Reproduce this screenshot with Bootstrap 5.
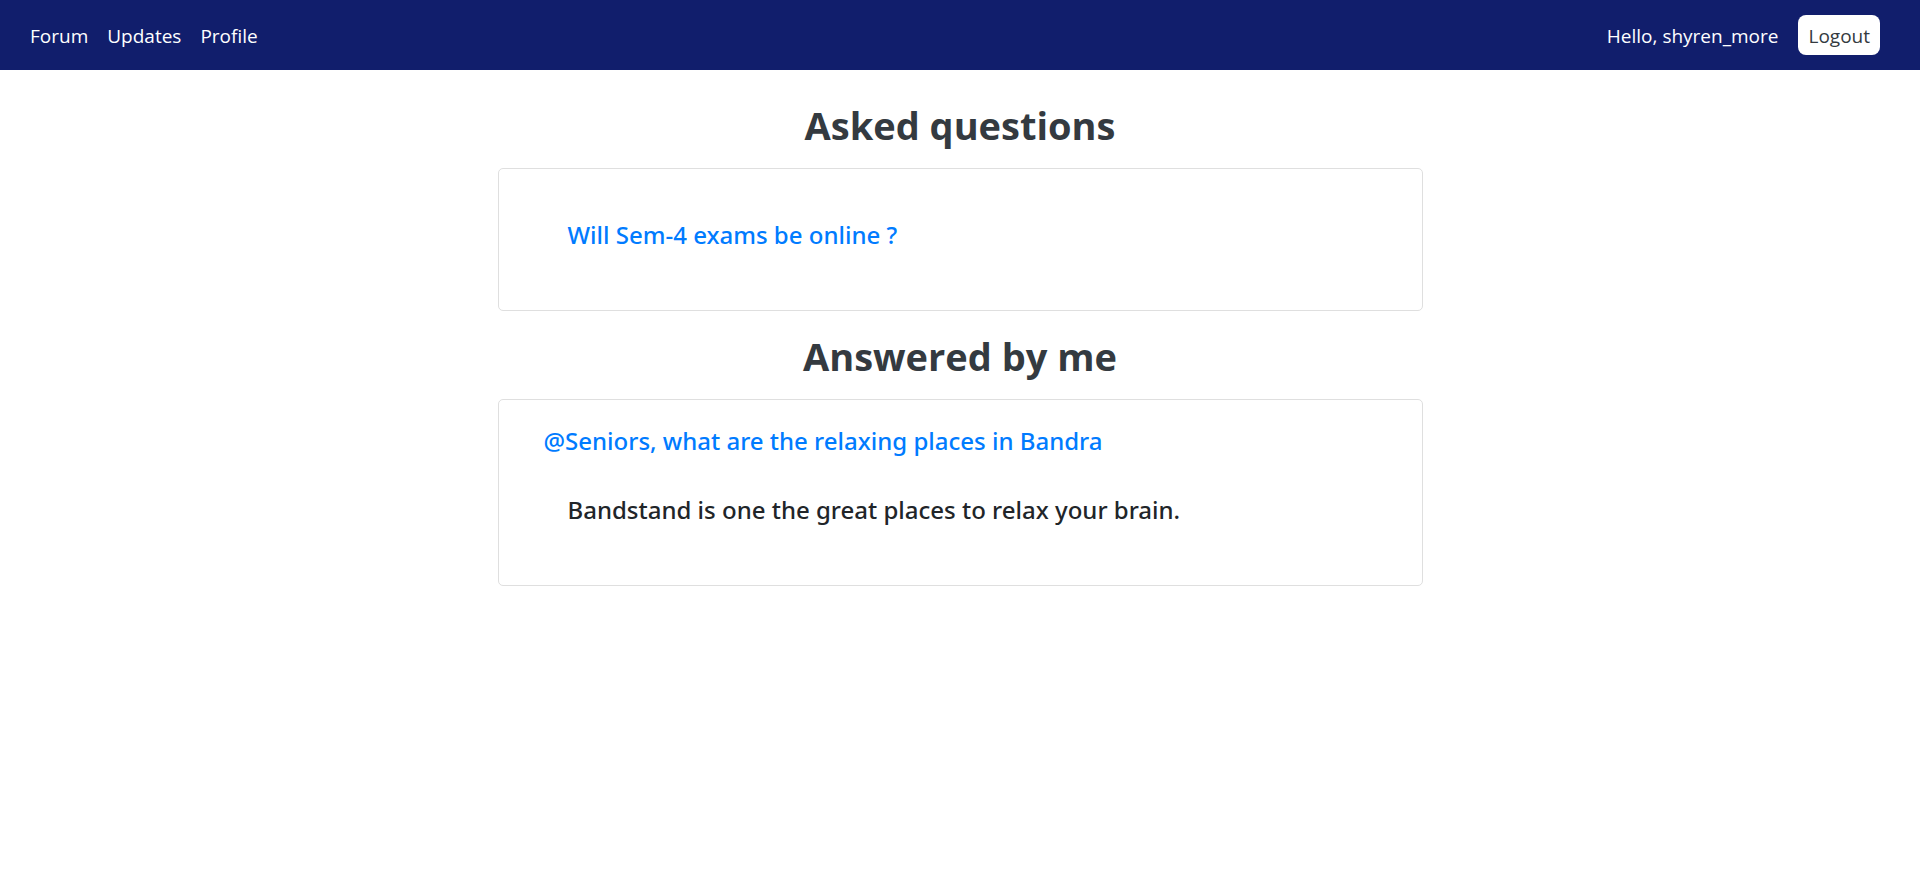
<!DOCTYPE html>
<html lang="en">
<head>
<meta charset="utf-8">
<meta name="viewport" content="width=device-width, initial-scale=1">
<title>Profile</title>
<link href="https://cdn.jsdelivr.net/npm/bootstrap@5.3.0/dist/css/bootstrap.min.css" rel="stylesheet">
<style>
  body { font-family: "Segoe UI", "Open Sans", "Noto Sans", sans-serif; font-size: 19px; line-height: 30px; color: #212529; }
  .topbar { background: #111e6c; padding: 15px 40px 15px 30px; min-height: 70px; }
  .topbar .navbar-nav { gap: 19px; }
  .topbar .navbar-nav .nav-link { color: #fff; padding: 6px 0 4px; }
  .greeting { color: #fff; padding: 6px 0 4px; }
  .logout { background: #fff; color: #343a40; font-size: 19px; line-height: 30px; padding: 6px 10px 4px; border: 0; border-radius: 8px; }
  .profile { max-width: 925px; padding-top: 31px; }
  .profile h1 { font-size: 38px; line-height: 48px; font-weight: 700; color: #343a40; margin: 0 0 19px; }
  .post { border: 1px solid #dfdfdf; border-radius: 5px; margin-bottom: 21px; padding: 26px 45px 24px; }
  .post h2 { font-family: "Segoe UI", "Noto Sans", sans-serif; font-size: 24px; line-height: 30px; font-weight: 500; margin: 0; }
  .post a { color: #007bff; }
  .entry { padding: 25px 24px 36px; }
  .post h2 + .entry { margin-top: 14px; }
</style>
</head>
<body>
<nav class="navbar navbar-expand topbar">
  <ul class="navbar-nav me-auto">
    <li class="nav-item"><a class="nav-link" href="#">Forum</a></li>
    <li class="nav-item"><a class="nav-link" href="#">Updates</a></li>
    <li class="nav-item"><a class="nav-link" href="#">Profile</a></li>
  </ul>
  <div class="d-flex align-items-center">
    <span class="greeting me-3 pe-1">Hello, shyren_more</span>
    <button type="button" class="btn logout">Logout</button>
  </div>
</nav>
<main class="container-fluid px-0 profile">
  <section>
    <h1 class="text-center">Asked questions</h1>
    <article class="post">
      <div class="entry"><h2><a class="text-decoration-none" href="#">Will Sem-4 exams be online ?</a></h2></div>
    </article>
  </section>
  <section>
    <h1 class="text-center">Answered by me</h1>
    <article class="post">
      <h2><a class="text-decoration-none" href="#">@Seniors, what are the relaxing places in Bandra</a></h2>
      <div class="entry"><h2>Bandstand is one the great places to relax your brain.</h2></div>
    </article>
  </section>
</main>
<script src="https://cdn.jsdelivr.net/npm/bootstrap@5.3.0/dist/js/bootstrap.bundle.min.js"></script>
</body>
</html>
